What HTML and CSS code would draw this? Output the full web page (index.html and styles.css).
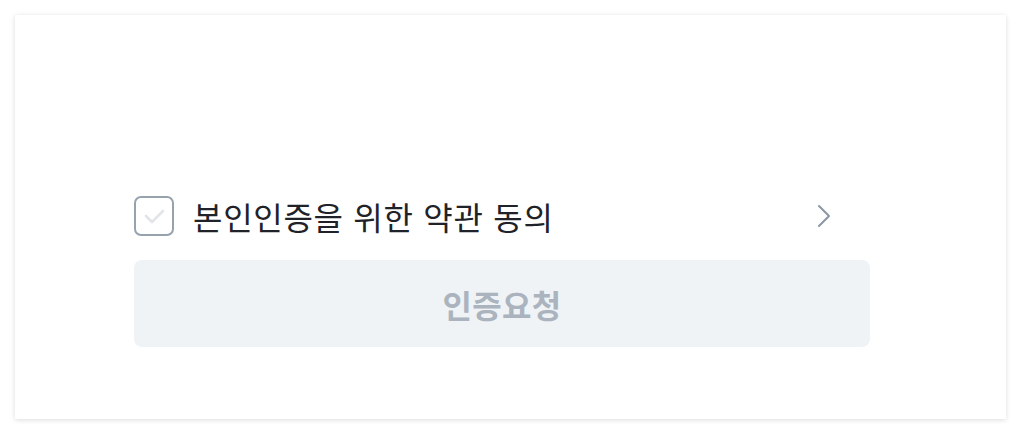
FILE: index.html
```html
<!DOCTYPE html>
<html lang="ko">
<head>
    <meta charset="UTF-8">
    <meta name="viewport" content="width=device-width, initial-scale=1.0">
    <title>본인인증</title>
    <link rel="stylesheet" href="styles.css">
</head>
<body>

    <div class="card">
        <div class="content">
            <div class="agree-row">
                <label class="agree">
                    <span class="check-box">
                        <svg width="22" height="16" viewBox="0 0 22 16">
                            <polyline points="3,8 9,14 20,3" fill="none" stroke="#e1e5ea" stroke-width="2.6" stroke-linecap="round" stroke-linejoin="round"/>
                        </svg>
                    </span>
                    <span class="agree-text">본인인증을 위한 약관 동의</span>
                </label>
                <span class="chevron">
                    <svg width="14" height="24" viewBox="0 0 14 24">
                        <polyline points="2,2 12,12 2,22" fill="none" stroke="#8b97a5" stroke-width="2" stroke-linecap="round" stroke-linejoin="round"/>
                    </svg>
                </span>
            </div>
            <button class="request-btn" disabled>인증요청</button>
        </div>
    </div>

</body>
</html>
```

FILE: styles.css
```css
body {
    margin: 0;
    padding: 15px 16px 15px 15px;
    background-color: #fff;
    font-family: 'Noto Sans CJK KR', 'Noto Sans', sans-serif;
}
.card {
    height: 404px;
    box-sizing: border-box;
    background-color: #fff;
    box-shadow: 0 1px 5px rgba(0, 0, 0, 0.14);
    padding: 181px 0 0 119px;
}
.content {
    width: 736px;
}
.agree-row {
    display: flex;
    align-items: center;
    justify-content: space-between;
    height: 40px;
}
.agree {
    display: flex;
    align-items: center;
    gap: 19px;
}
.check-box {
    width: 40px;
    height: 40px;
    box-sizing: border-box;
    border: 2px solid #97a2af;
    border-radius: 7px;
    display: flex;
    align-items: center;
    justify-content: center;
}
.agree-text {
    font-size: 32px;
    color: #1f2329;
    letter-spacing: 0.7px;
    line-height: 40px;
}
.chevron {
    display: flex;
    margin-right: 39px;
}
.request-btn {
    display: block;
    width: 100%;
    height: 87px;
    margin-top: 24px;
    border: none;
    border-radius: 8px;
    background-color: #eff3f6;
    color: #abb4be;
    font-family: inherit;
    font-size: 32px;
    font-weight: 700;
    letter-spacing: 0.3px;
}
```
